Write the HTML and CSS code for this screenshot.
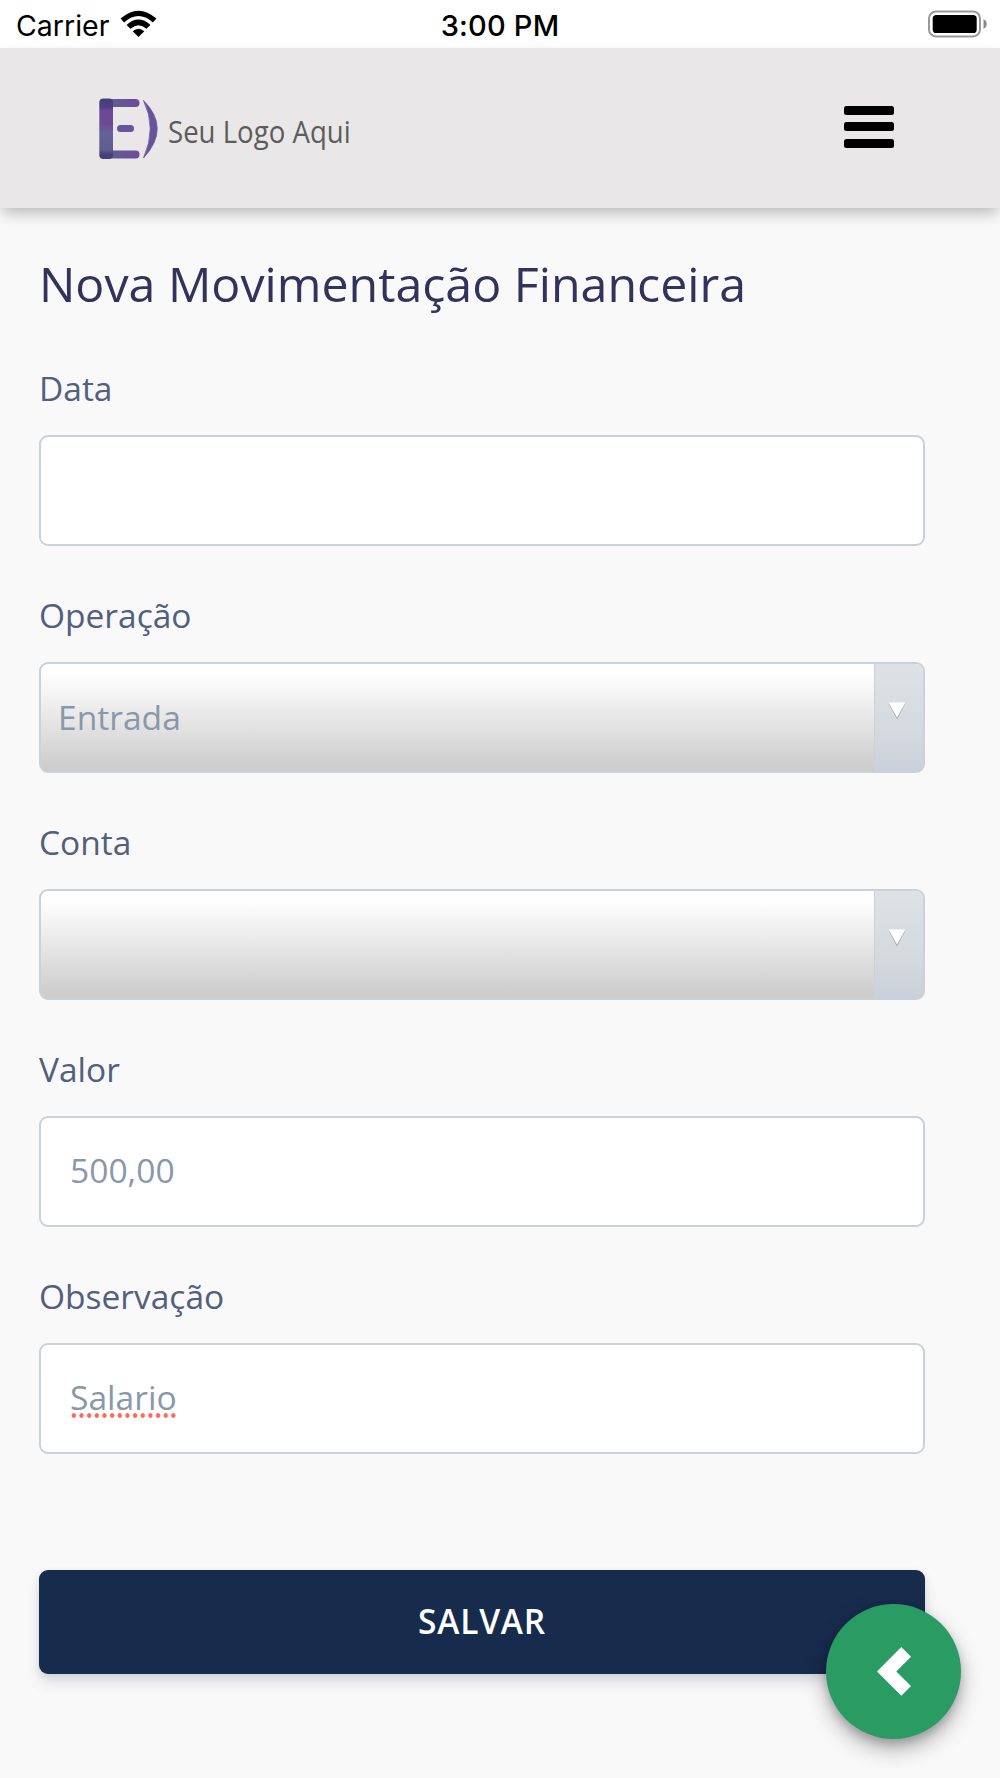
FILE: index.html
```html
<!DOCTYPE html>
<html lang="pt-BR">
<head>
    <meta charset="UTF-8">
    <meta name="viewport" content="width=device-width, initial-scale=1.0">
    <title>Nova Movimentação Financeira</title>
    <link rel="stylesheet" href="styles.css">
</head>
<body>
    <!-- Barra de status -->
    <div class="status-bar">
        <div class="status-left">
            <span class="carrier">Carrier</span>
            <svg class="wifi" width="37" height="28" viewBox="0 0 37 28">
                <path d="M0.6 8.6 Q18.5 -7.2 36.4 8.6 L32.8 12.4 Q18.5 -0.4 4.2 12.4 Z"/>
                <path d="M6.6 14.9 Q18.5 4.2 30.4 14.9 L26.5 18.8 Q18.5 11.6 10.5 18.8 Z"/>
                <path d="M12.7 21.2 Q18.5 16.2 24.3 21.2 L18.5 27 Z"/>
            </svg>
        </div>
        <span class="time">3:00 PM</span>
        <div class="status-right">
            <svg width="59" height="28" viewBox="0 0 59 28">
                <rect x="1" y="1.4" width="51" height="25" rx="7" fill="none" stroke="#999" stroke-width="2"/>
                <rect x="4.7" y="5" width="44" height="18" rx="3.6"/>
                <path d="M55.5 9 Q58.7 10.6 58.7 14 Q58.7 17.4 55.5 19 Z" fill="#888"/>
            </svg>
        </div>
    </div>

    <!-- Cabeçalho -->
    <header class="header">
        <div class="logo">
            <svg width="60" height="64" viewBox="0 0 60 64">
                <defs>
                    <linearGradient id="stem" x1="0" y1="0" x2="0" y2="1">
                        <stop offset="0" stop-color="#483e78"/>
                        <stop offset="0.13" stop-color="#4b3f7d"/>
                        <stop offset="0.2" stop-color="#6c4795"/>
                        <stop offset="0.42" stop-color="#6c4a95"/>
                        <stop offset="0.58" stop-color="#646296"/>
                        <stop offset="0.85" stop-color="#5e5d90"/>
                        <stop offset="0.92" stop-color="#463f77"/>
                    </linearGradient>
                    <linearGradient id="bar" x1="0" y1="0" x2="1" y2="0">
                        <stop offset="0.3" stop-color="#5f5d91"/>
                        <stop offset="1" stop-color="#704a98"/>
                    </linearGradient>
                </defs>
                <rect x="1" y="1" width="39.5" height="8" rx="4" fill="url(#bar)"/>
                <rect x="1" y="52.5" width="39.5" height="8" rx="4" fill="url(#bar)"/>
                <rect x="18" y="27" width="17" height="7" rx="3.5" fill="#66559a"/>
                <rect x="0.3" y="0.5" width="13.7" height="60.5" rx="4" fill="url(#stem)"/>
                <path d="M44.5 2.5 Q72 30 44.5 60 Q58 30 44.5 2.5 Z" fill="#66539a" stroke="#66539a" stroke-width="0.8"/>
            </svg>
            <span class="logo-text">Seu Logo Aqui</span>
        </div>
        <button class="menu" aria-label="Menu">
            <span></span>
            <span></span>
            <span></span>
        </button>
    </header>

    <!-- Formulário -->
    <main class="content">
        <h1>Nova Movimentação Financeira</h1>
        <form class="form">
            <div class="field">
                <label for="data">Data</label>
                <input type="text" id="data" class="control">
            </div>
            <div class="field">
                <label>Operação</label>
                <div class="control select">
                    <span class="select-value">Entrada</span>
                    <span class="select-arrow"><svg width="18" height="18" viewBox="0 0 18 18"><path d="M0.5 1.5 H17.5 L9 17.5 Z" fill="#aaa"/><path d="M0.5 0.5 H17.5 L9 15.5 Z" fill="#fff"/></svg></span>
                </div>
            </div>
            <div class="field">
                <label>Conta</label>
                <div class="control select">
                    <span class="select-value"></span>
                    <span class="select-arrow"><svg width="18" height="18" viewBox="0 0 18 18"><path d="M0.5 1.5 H17.5 L9 17.5 Z" fill="#aaa"/><path d="M0.5 0.5 H17.5 L9 15.5 Z" fill="#fff"/></svg></span>
                </div>
            </div>
            <div class="field">
                <label for="valor">Valor</label>
                <input type="text" id="valor" class="control" value="500,00">
            </div>
            <div class="field">
                <label>Observação</label>
                <div class="control"><span class="misspelled">Salario</span></div>
            </div>
            <button type="button" class="save">SALVAR</button>
        </form>
    </main>

    <!-- Botão flutuante -->
    <button class="fab" aria-label="Voltar">
        <svg width="34" height="49" viewBox="0 0 34 49">
            <path d="M0 24.4 L24.3 0 L34 9.7 L19.3 24.4 L34 39 L24.3 48.7 Z" fill="#fff"/>
        </svg>
    </button>
</body>
</html>
```
FILE: styles.css
```css
* {
    box-sizing: border-box;
}

body {
    margin: 0;
    height: 1778px;
    overflow: hidden;
    background-color: #f9f9f9;
    font-family: "Open Sans", "Noto Sans", sans-serif;
}

button {
    border: none;
    padding: 0;
    cursor: pointer;
}

/* Barra de status */
.status-bar {
    display: grid;
    grid-template-columns: 1fr auto 1fr;
    height: 48px;
    padding: 0 13px 0 16px;
    background-color: #fff;
    font-family: Inter, sans-serif;
    font-size: 29px;
    line-height: 51px;
    color: #000;
}

.status-left {
    display: flex;
    gap: 12px;
}

.carrier {
    width: 92px;
    font-size: 28.5px;
}

.wifi {
    margin-top: 10px;
}

.time {
    margin-left: -3px;
    font-weight: 500;
    letter-spacing: 0.2px;
}

.status-right {
    display: flex;
    justify-content: flex-end;
    padding-top: 10px;
}

/* Cabeçalho */
.header {
    display: flex;
    justify-content: space-between;
    align-items: flex-start;
    height: 160px;
    padding: 50px 106px 0 99px;
    background-color: #e9e7e8;
    box-shadow: 0 7px 14px -2px rgba(0, 0, 0, 0.26);
}

.logo {
    display: flex;
    gap: 9px;
}

.logo-text {
    margin-top: 12px;
    font-size: 31px;
    line-height: 42px;
    white-space: nowrap;
    color: #5c5c5c;
    transform: scaleX(0.89);
    transform-origin: left;
}

.menu {
    display: flex;
    flex-direction: column;
    gap: 7.7px;
    width: 50px;
    margin-top: 7.5px;
    background: none;
}

.menu span {
    height: 9px;
    border-radius: 2.5px;
    background-color: #000;
}

/* Formulário */
.content {
    padding: 42px 75px 0 39px;
}

h1 {
    margin: 0 0 49px;
    font-size: 48.3px;
    font-weight: 400;
    line-height: 66px;
    color: #32325d;
}

.field {
    margin-bottom: 46px;
}

label {
    display: block;
    margin-bottom: 24px;
    font-size: 33.5px;
    line-height: 46px;
    color: #525f7f;
}

.control {
    display: flex;
    align-items: center;
    width: 100%;
    height: 111px;
    padding: 0 29px 4px;
    border: 2px solid #cad1d7;
    border-radius: 9px;
    background-color: #fff;
    font-family: inherit;
    font-size: 33.6px;
    color: #8898aa;
}

.select {
    align-items: stretch;
    justify-content: space-between;
    padding: 0 0 0 17px;
    overflow: hidden;
    background: linear-gradient(#fff 8%, #cdcdcd 96%);
}

.select-value {
    line-height: 106px;
}

.select-arrow {
    width: 49px;
    padding: 38px 0 0 13px;
    border-left: 1px solid #cad1d7;
    background: linear-gradient(#dee2e6, #d3d9dd 65%, #cbd1db);
}

.select-arrow svg {
    display: block;
}

/* Sublinhado do corretor ortográfico */
.misspelled {
    position: relative;
}

.misspelled::after {
    content: "";
    position: absolute;
    left: 0;
    bottom: 2px;
    width: 107px;
    height: 5px;
    background: radial-gradient(circle, #ff6861 2px, transparent 2.6px) 0 0 / 7.67px 5px;
}

.save {
    display: block;
    width: 100%;
    height: 104px;
    margin-top: 116px;
    padding-bottom: 3px;
    border-radius: 9px;
    background-color: #172b4d;
    box-shadow: 0 9px 14px rgba(50, 50, 93, 0.13), 0 2px 7px rgba(0, 0, 0, 0.08);
    font-family: inherit;
    font-size: 33.5px;
    font-weight: 600;
    letter-spacing: 0.8px;
    color: #fff;
}

/* Botão flutuante */
.fab {
    position: absolute;
    left: 826px;
    top: 1604px;
    display: flex;
    align-items: center;
    justify-content: center;
    width: 135px;
    height: 135px;
    border-radius: 50%;
    background-color: #299b63;
    box-shadow: 0 10px 22px rgba(0, 0, 0, 0.3), 0 5px 9px rgba(0, 0, 0, 0.16);
}
```
